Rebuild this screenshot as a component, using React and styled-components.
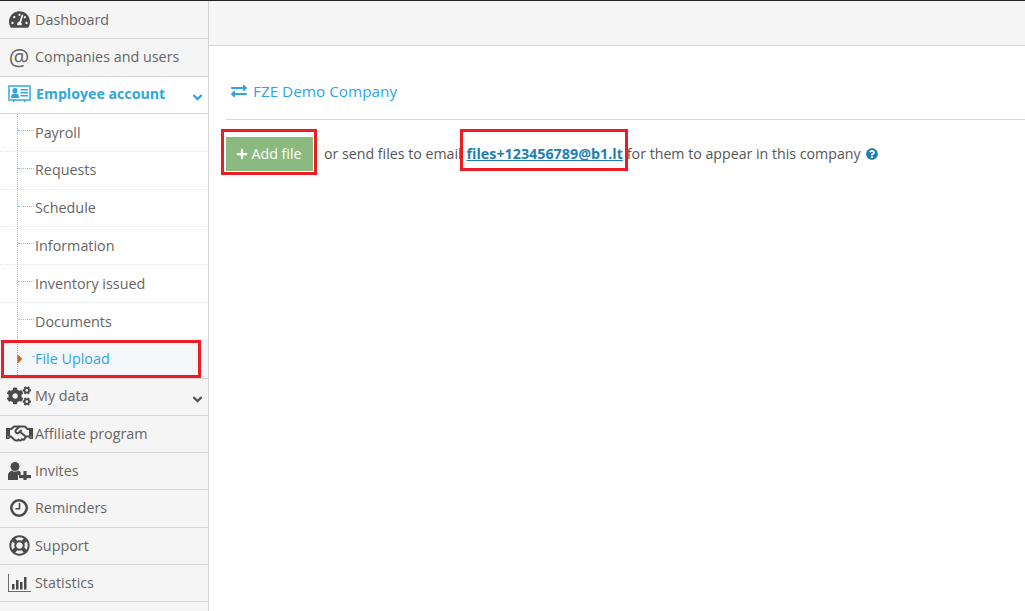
import React from "react";
import styled, { createGlobalStyle } from "styled-components";
import {
  FaTachometerAlt,
  FaCogs,
  FaRegHandshake,
  FaRegLifeRing,
  FaExchangeAlt,
  FaPlus,
  FaQuestionCircle,
  FaAngleDown,
  FaCaretRight,
} from "react-icons/fa";

const GlobalStyle = createGlobalStyle`
  html, body {
    margin: 0;
    padding: 0;
    background: #fff;
    overflow: hidden;
  }
  * {
    box-sizing: border-box;
  }
  body {
    font-family: "Open Sans", "Liberation Sans", sans-serif;
    font-size: 14.2px;
    color: #555;
  }
`;

const Page = styled.div`
  display: flex;
  width: 1025px;
  height: 611px;
  overflow: hidden;
  border-top: 1px solid #222;
`;

const Sidebar = styled.nav`
  width: 209px;
  flex-shrink: 0;
  background: #f5f5f5;
  border-right: 1px solid #d4d4d4;
  font-size: 14.35px;
`;

const MenuRow = styled.div`
  position: relative;
  display: flex;
  align-items: center;
  height: ${(p) => p.$height}px;
  padding-bottom: ${(p) => p.$pad ?? 0}px;
  border-bottom: 1px solid #d6d6d6;
  color: #666;
  white-space: nowrap;
`;

const AtSign = styled.span`
  font-size: 23px;
  line-height: 22px;
  color: #666;
`;

const IconSlot = styled.span`
  display: flex;
  align-items: center;
  justify-content: center;
  width: 35px;
  padding-left: 3px;
  color: #4a4a4a;
  flex-shrink: 0;
`;

const ActiveRow = styled(MenuRow).attrs({ $height: 37, $pad: 3 })`
  background: #fff;
  color: #2ea7e0;
  font-weight: 700;
  font-size: 14.2px;

  ${IconSlot} {
    width: 36px;
    color: #2ea7e0;
  }
`;

const Arrow = styled.span`
  position: absolute;
  right: 3px;
  top: 13px;
  display: flex;
  color: ${(p) => (p.$active ? "#2ea7e0" : "#555")};
`;

const SubList = styled.div`
  position: relative;
  background: #fff;

  &::before {
    content: "";
    position: absolute;
    left: 17px;
    top: 0;
    bottom: 2px;
    border-left: 1px dotted #7fc0f0;
    z-index: 1;
  }
`;

const SubRow = styled.div`
  position: relative;
  display: flex;
  align-items: center;
  height: ${(p) => p.$height}px;
  padding: 0 0 ${(p) => p.$pad ?? 0}px 35px;
  border-bottom: 1px dotted #e2e2e2;
  color: #666;

  &::before {
    content: "";
    position: absolute;
    left: 18px;
    top: 16px;
    width: 16px;
    border-top: 1px dotted #7fc0f0;
  }
`;

const CurrentRow = styled(SubRow).attrs({ $height: 38, $pad: 2 })`
  background: #f4f6fa;
  color: #2ea7e0;
  border-bottom: 1px solid #d6d6d6;

  &::before {
    left: 32px;
    top: 15px;
    width: 2px;
  }
`;

const Caret = styled.span`
  position: absolute;
  left: 13px;
  top: 11px;
  display: flex;
  color: #c8642a;
  z-index: 2;
`;

const RedBox = styled.span`
  position: absolute;
  top: ${(p) => p.$top}px;
  left: ${(p) => p.$left}px;
  width: ${(p) => p.$width}px;
  height: ${(p) => p.$height}px;
  border: 3px solid #ed1c24;
  z-index: 3;
  pointer-events: none;
`;

const Main = styled.main`
  flex: 1;
  min-width: 0;
`;

const TopBar = styled.div`
  height: 45px;
  background: #f5f5f5;
  border-bottom: 1px solid #d6d6d6;
`;

const Content = styled.div`
  padding-left: 17px;
`;

const CompanyRow = styled.div`
  display: flex;
  align-items: center;
  gap: 6px;
  height: 74px;
  padding: 17px 0 0 5px;
  border-bottom: 1px solid #d8d8d8;
  font-size: 15.3px;
  color: #2ea7e0;
`;

const UploadRow = styled.div`
  display: flex;
  align-items: center;
  margin-top: 17px;
  white-space: nowrap;
  line-height: 20px;
`;

const AddFile = styled.button`
  position: relative;
  display: flex;
  align-items: center;
  justify-content: center;
  gap: 3px;
  width: 87px;
  height: 34px;
  margin-right: 11px;
  padding: 0 1px 1px 0;
  border: none;
  background: #8aba80;
  color: #fff;
  font-family: inherit;
  font-size: 14.25px;
`;

const UploadText = styled.span`
  color: #555;
`;

const MailLink = styled.a`
  position: relative;
  margin: 0 4px 0 5px;
  color: #1f7fae;
  font-weight: 700;
  font-size: 14.3px;
  text-decoration: underline;
`;

const HelpIcon = styled.span`
  display: flex;
  margin-left: 5px;
  color: #1f7fae;
`;

const CardIcon = () => (
  <svg width="23" height="17" viewBox="0 0 23 17" fill="currentColor">
    <rect x="1" y="1" width="21" height="14" fill="none" stroke="currentColor" strokeWidth="2" opacity="0.75" />
    <circle cx="7" cy="5.5" r="2.6" />
    <path d="M3 13 C3 9.5 4.5 8.5 7 8.5 C9.5 8.5 11 9.5 11 13 Z" />
    <rect x="12.5" y="4" width="7.5" height="1.5" />
    <rect x="12.5" y="7" width="7.5" height="1.5" />
    <rect x="12.5" y="10" width="7.5" height="1.5" />
    <rect x="5" y="15" width="1.5" height="2" />
    <rect x="16" y="15" width="1.5" height="2" />
  </svg>
);

const InviteIcon = () => (
  <svg width="23" height="18" viewBox="0 0 23 18" fill="currentColor">
    <circle cx="7" cy="4.5" r="4.5" />
    <path d="M0 18 V13 C0 10.5 2 9.2 3.8 8.4 C5.5 10 8.5 10 10.2 8.4 C11.2 8.9 12 9.4 12.7 10 V13 H10 V18 Z" />
    <rect x="11" y="13" width="12" height="3.2" />
    <rect x="15.4" y="9" width="3.2" height="9" />
  </svg>
);

const ClockIcon = () => (
  <svg width="18" height="18" viewBox="0 0 18 18" fill="none" stroke="currentColor">
    <circle cx="9" cy="9" r="7.7" strokeWidth="2.5" />
    <path d="M9.5 4 V9.7 H5.5" strokeWidth="1.6" />
  </svg>
);

const ChartIcon = () => (
  <svg width="23" height="18" viewBox="0 0 23 18" fill="currentColor">
    <rect x="0" y="0" width="1" height="18" opacity="0.8" />
    <rect x="0" y="17" width="23" height="1" opacity="0.8" />
    <rect x="4" y="10" width="2.5" height="5.5" />
    <rect x="8" y="6" width="2.5" height="9.5" />
    <rect x="12" y="8" width="2.5" height="7.5" />
    <rect x="16" y="3" width="2.5" height="12.5" />
  </svg>
);

const topItems = [
  { label: "Dashboard", icon: <FaTachometerAlt size={21} />, height: 38 },
  { label: "Companies and users", icon: <AtSign>@</AtSign>, height: 38, pad: 2 },
];

const subItems = [
  { label: "Payroll", height: 38, pad: 0 },
  { label: "Requests", height: 38, pad: 2 },
  { label: "Schedule", height: 37, pad: 1 },
  { label: "Information", height: 38, pad: 0 },
  { label: "Inventory issued", height: 38, pad: 0 },
  { label: "Documents", height: 38, pad: 0 },
];

const bottomItems = [
  { label: "My data", icon: <FaCogs size={24} />, height: 37, pad: 3, arrow: true },
  { label: "Affiliate program", icon: <FaRegHandshake size={27} />, height: 37, pad: 1 },
  { label: "Invites", icon: <InviteIcon />, height: 37, pad: 1 },
  { label: "Reminders", icon: <ClockIcon />, height: 38, pad: 2 },
  { label: "Support", icon: <FaRegLifeRing size={21} />, height: 37, pad: 1 },
  { label: "Statistics", icon: <ChartIcon />, height: 37, pad: 1 },
];

const App = () => {
  return (
    <>
      <GlobalStyle />
      <Page>
        <Sidebar>
          {topItems.map((item) => (
            <MenuRow key={item.label} $height={item.height} $pad={item.pad}>
              <IconSlot>{item.icon}</IconSlot>
              {item.label}
            </MenuRow>
          ))}
          <ActiveRow>
            <IconSlot>
              <CardIcon />
            </IconSlot>
            Employee account
            <Arrow $active>
              <FaAngleDown size={15} />
            </Arrow>
          </ActiveRow>
          <SubList>
            {subItems.map((item) => (
              <SubRow key={item.label} $height={item.height} $pad={item.pad}>
                {item.label}
              </SubRow>
            ))}
            <CurrentRow>
              <Caret>
                <FaCaretRight size={14} />
              </Caret>
              File Upload
              <RedBox $top={-1} $left={1} $width={200} $height={38} />
            </CurrentRow>
          </SubList>
          {bottomItems.map((item) => (
            <MenuRow key={item.label} $height={item.height} $pad={item.pad}>
              <IconSlot>{item.icon}</IconSlot>
              {item.label}
              {item.arrow && (
                <Arrow>
                  <FaAngleDown size={15} />
                </Arrow>
              )}
            </MenuRow>
          ))}
        </Sidebar>
        <Main>
          <TopBar />
          <Content>
            <CompanyRow>
              <FaExchangeAlt size={16} />
              FZE Demo Company
            </CompanyRow>
            <UploadRow>
              <AddFile>
                <FaPlus size={12} />
                Add file
                <RedBox $top={-8} $left={-5} $width={96} $height={46} />
              </AddFile>
              <UploadText>or send files to email</UploadText>
              <MailLink href="#">
                files+123456789@b1.lt
                <RedBox $top={-15} $left={-7} $width={168} $height={42} />
              </MailLink>
              <UploadText>for them to appear in this company</UploadText>
              <HelpIcon>
                <FaQuestionCircle size={12} />
              </HelpIcon>
            </UploadRow>
          </Content>
        </Main>
      </Page>
    </>
  );
};

export default App;
